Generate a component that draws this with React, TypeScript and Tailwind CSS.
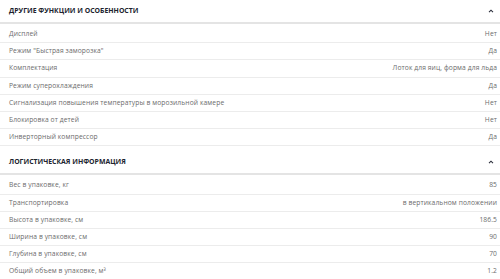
import React from 'react'

type Row = [string, string]

const features: Row[] = [
  ['Дисплей', 'Нет'],
  ['Режим "Быстрая заморозка"', 'Да'],
  ['Комплектация', 'Лоток для яиц, форма для льда'],
  ['Режим суперохлаждения', 'Да'],
  ['Сигнализация повышения температуры в морозильной камере', 'Нет'],
  ['Блокировка от детей', 'Нет'],
  ['Инверторный компрессор', 'Да'],
]

const logistics: Row[] = [
  ['Вес в упаковке, кг', '85'],
  ['Транспортировка', 'в вертикальном положении'],
  ['Высота в упаковке, см', '186.5'],
  ['Ширина в упаковке, см', '90'],
  ['Глубина в упаковке, см', '70'],
  ['Общий объем в упаковке, м³', '1.2'],
]

const Chevron = () => (
  <svg width="6" height="4" viewBox="0 0 6 4" className="text-[#2a2d3a]">
    <path d="M1 3.2 L3 1.2 L5 3.2" fill="none" stroke="currentColor" strokeWidth="1.1" />
  </svg>
)

const Section = ({ title, rows, top }: { title: string; rows: Row[]; top?: boolean }) => (
  <div>
    <div className={`flex items-center justify-between pl-[9px] pr-[6px] ${top ? 'h-[22px]' : 'h-[27px] pt-[5px]'}`}>
      <h2 className="text-[6.9px] font-bold text-[#20232e]">{title}</h2>
      <Chevron />
    </div>
    <div className="border-t-2 border-[#e4e4e4] pt-[2px]">
      {rows.map(([k, v]) => (
        <div
          key={k}
          className="flex items-center justify-between h-[17.2px] pl-[9px] pr-[3px] border-b border-[#ececec] text-[6.7px] tracking-[0.1px] text-[#6b6b6b]"
        >
          <span>{k}</span>
          <span>{v}</span>
        </div>
      ))}
    </div>
  </div>
)

const App = () => {
  return (
    <div className="w-[500px] h-[279px] overflow-hidden bg-white" style={{ fontFamily: '"Open Sans", "Noto Sans", sans-serif' }}>
      <Section title="ДРУГИЕ ФУНКЦИИ И ОСОБЕННОСТИ" rows={features} top />
      <Section title="ЛОГИСТИЧЕСКАЯ ИНФОРМАЦИЯ" rows={logistics} />
    </div>
  )
}

export default App
